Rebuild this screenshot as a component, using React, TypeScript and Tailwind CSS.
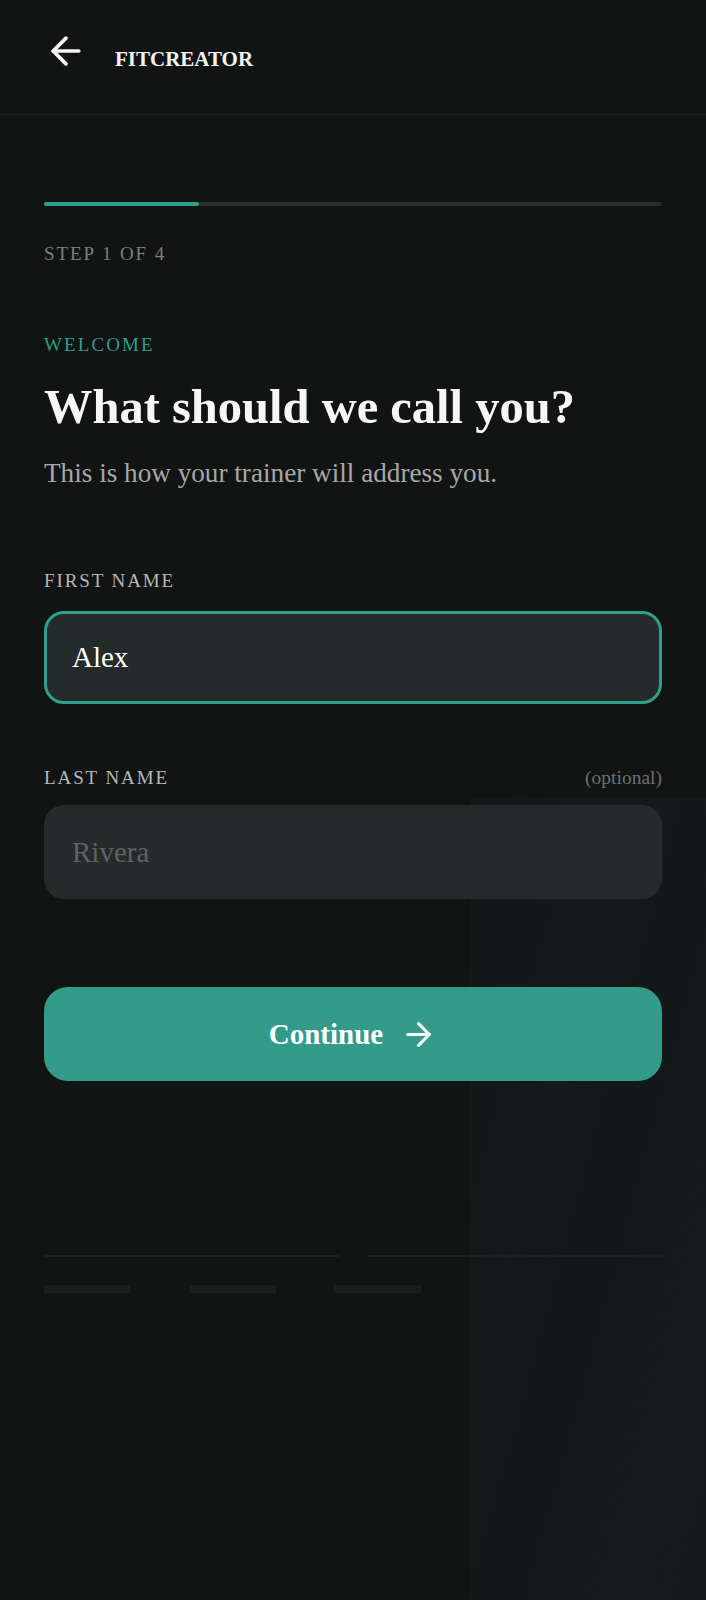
import React from "react";

const serif = "font-['Liberation_Serif','Times_New_Roman',serif]";

function ArrowLeftIcon({ size }: { size: number }) {
  return (
    <svg
      width={size}
      height={size}
      viewBox="0 0 24 24"
      fill="none"
      stroke="currentColor"
      strokeWidth={2}
      strokeLinecap="round"
      strokeLinejoin="round"
    >
      <path d="M19 12H5" />
      <path d="M12 19l-7-7 7-7" />
    </svg>
  );
}

function ArrowRightIcon({ size }: { size: number }) {
  return (
    <svg
      width={size}
      height={size}
      viewBox="0 0 24 24"
      fill="none"
      stroke="currentColor"
      strokeWidth={2}
      strokeLinecap="round"
      strokeLinejoin="round"
    >
      <path d="M5 12h14" />
      <path d="M12 5l7 7-7 7" />
    </svg>
  );
}

const labelClass =
  "text-[19px] leading-none tracking-[0.1em] uppercase text-[#b4b8b8]";

export default function App() {
  return (
    <div
      className={`${serif} relative min-h-[1600px] overflow-hidden bg-[#121414] text-white`}
    >
      {/* soft glow bottom right */}
      <div className="pointer-events-none absolute left-[470px] top-[798px] right-0 bottom-0 bg-[linear-gradient(105deg,#131717_0%,#141919_35%,#131818_55%,#151a1b_80%,#141919_100%)]" />

      {/* header */}
      <header className="relative flex h-[115px] items-start gap-[27px] border-b border-[#1c1f1f] px-[44px] pt-[29px]">
        <button className="flex h-[44px] w-[44px] items-center justify-center text-[#f4f4f4]">
          <ArrowLeftIcon size={44} />
        </button>
        <span className="mt-[20px] text-[21px] font-bold leading-none text-[#f4f4f4]">
          FITCREATOR
        </span>
      </header>

      <main className="relative px-[44px]">
        {/* progress */}
        <div className="mt-[87px] h-[4px] w-full rounded-full bg-[#2a2e2f]">
          <div className="h-full w-1/4 rounded-full bg-[#2f9e8a]" />
        </div>
        <p className="mt-[38px] text-[19px] leading-none tracking-[0.1em] text-[#7b7f7f]">
          STEP 1 OF 4
        </p>

        <p className="mt-[72px] text-[19px] leading-none tracking-[0.11em] text-[#2f9e8a]">
          WELCOME
        </p>
        <h1 className="mt-[29px] text-[48.5px] font-bold leading-none text-[#f6f6f6]">
          What should we call you?
        </h1>
        <p className="mt-[28px] text-[27.2px] leading-none text-[#a5a9a9]">
          This is how your trainer will address you.
        </p>

        {/* first name */}
        <label className={`mt-[84px] block ${labelClass}`}>First name</label>
        <div className="mt-[21px] flex h-[93px] items-center rounded-[20px] border-[3px] border-[#2f9e8a] bg-[#252a2b] pl-[25px]">
          <span className="text-[29px] leading-none text-white">Alex</span>
        </div>

        {/* last name */}
        <div className="mt-[64px] flex items-end justify-between">
          <label className={labelClass}>Last name</label>
          <span className="text-[19.5px] leading-none text-[#6c7070]">
            (optional)
          </span>
        </div>
        <div className="mt-[18px] flex h-[94px] items-center rounded-[20px] bg-[#252a2b] pl-[28px]">
          <span className="text-[29px] leading-none text-[#5d6363]">Rivera</span>
        </div>

        {/* continue */}
        <button className="mt-[88px] flex h-[94px] w-full items-center justify-center gap-[17px] rounded-[24px] bg-[#349a8a] text-white">
          <span className="text-[29px] font-bold leading-none">Continue</span>
          <ArrowRightIcon size={37} />
        </button>

        {/* skeleton footer */}
        <div className="mt-[174px] grid grid-cols-2 gap-[28px]">
          <div className="h-[2px] rounded-full bg-[#1d2020]" />
          <div className="h-[2px] rounded-full bg-[#1d2020]" />
        </div>
        <div className="mt-[28px] flex gap-[58px]">
          <div className="h-[8px] w-[87px] bg-[#1b1e1e]" />
          <div className="h-[8px] w-[87px] bg-[#1b1e1e]" />
          <div className="h-[8px] w-[87px] bg-[#1b1e1e]" />
        </div>
      </main>
    </div>
  );
}
